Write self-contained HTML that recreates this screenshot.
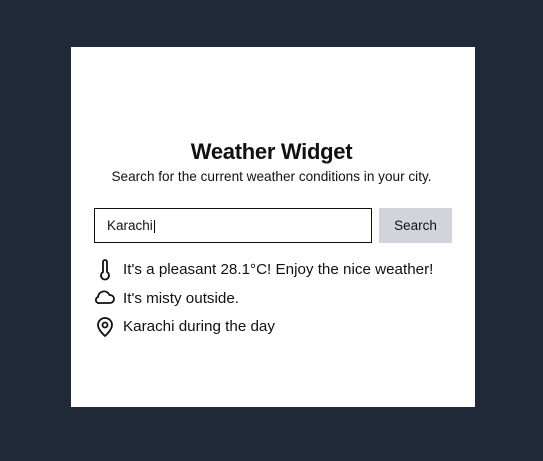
<!DOCTYPE html>
<html><head><style>
body{margin:0;width:543px;height:461px;background:#1f2937;font-family:"Liberation Sans",sans-serif;position:relative;overflow:hidden}
.card{position:absolute;left:71px;top:47px;width:404px;height:360px;background:#fff}
h1{position:absolute;left:0;width:100%;top:139px;margin:0;text-align:center;font-size:22px;font-weight:bold;color:#111;letter-spacing:-0.3px}
.sub{position:absolute;left:0;width:100%;top:169px;text-align:center;font-size:13.6px;color:#111}
.inp{position:absolute;left:94px;top:208px;width:278px;height:35px;border:1px solid #111;box-sizing:border-box}
.inp span{position:absolute;left:12px;top:9px;font-size:13.5px;color:#111}
.btn{position:absolute;left:379px;top:208px;width:73px;height:35px;background:#d1d5db;font-size:13.5px;color:#111;text-align:center;line-height:35px}
.row{position:absolute;left:123px;font-size:15.2px;color:#111}
svg{position:absolute}
</style></head><body>
<div class="card"></div>
<h1>Weather Widget</h1>
<div class="sub">Search for the current weather conditions in your city.</div>
<div class="inp"><span>Karachi|</span></div>
<div class="btn">Search</div>
<svg style="left:96px;top:259px" width="18" height="22" viewBox="0 0 18 22" fill="none" stroke="#111" stroke-width="1.8"><path d="M7 3a2 2 0 0 1 4 0v10a4 4 0 1 1-4 0z"/></svg>
<div class="row" style="top:261px">It's a pleasant 28.1°C! Enjoy the nice weather!</div>
<svg style="left:94px;top:288px" width="22" height="18" viewBox="0 0 22 18" fill="none" stroke="#111" stroke-width="1.8"><path d="M6 15h10a4 4 0 0 0 0-8h-0.5A6 6 0 0 0 4 9a3 3 0 0 0 2 6z"/></svg>
<div class="row" style="top:290px">It's misty outside.</div>
<svg style="left:95px;top:316px" width="20" height="22" viewBox="0 0 20 22" fill="none" stroke="#111" stroke-width="1.8"><path d="M10 20s-7-6-7-11a7 7 0 0 1 14 0c0 5-7 11-7 11z"/><circle cx="10" cy="9" r="2.5"/></svg>
<div class="row" style="top:318px">Karachi during the day</div>
</body></html>
